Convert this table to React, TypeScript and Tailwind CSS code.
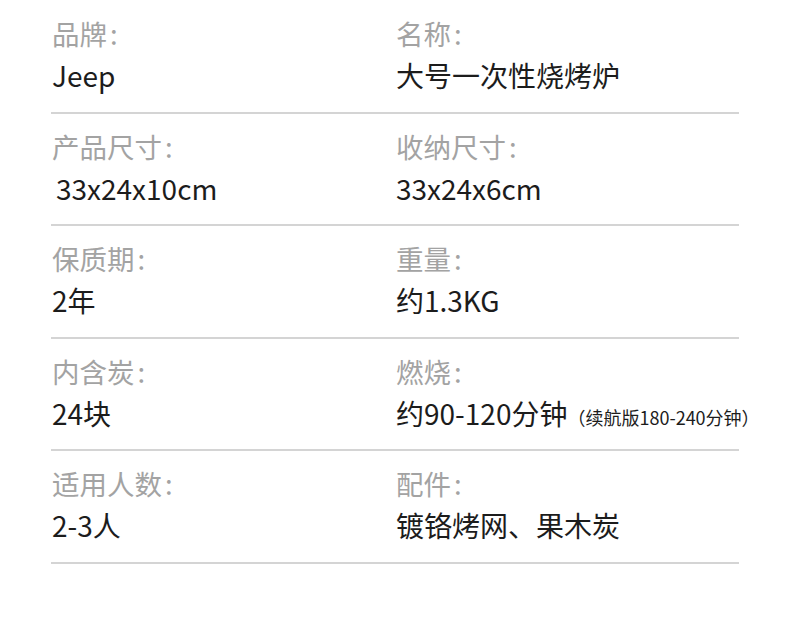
import * as React from 'react';

type Spec = {
    label: string;
    value: string;
    note?: string;
    indent?: boolean;
};

const rows: [Spec, Spec][] = [
    [
        { label: '品牌', value: 'Jeep' },
        { label: '名称', value: '大号一次性烧烤炉' },
    ],
    [
        { label: '产品尺寸', value: '33x24x10cm', indent: true },
        { label: '收纳尺寸', value: '33x24x6cm' },
    ],
    [
        { label: '保质期', value: '2年' },
        { label: '重量', value: '约1.3KG' },
    ],
    [
        { label: '内含炭', value: '24块' },
        { label: '燃烧', value: '约90-120分钟', note: '（续航版180-240分钟）' },
    ],
    [
        { label: '适用人数', value: '2-3人' },
        { label: '配件', value: '镀铬烤网、果木炭' },
    ],
];

function Cell({ spec }: { spec: Spec }) {
    return (
        <div className="flex flex-col pl-px">
            <span className="text-[27.5px] leading-[36px] text-[#a3a3a3]">
                {spec.label}
                <span className="ml-[3px]">:</span>
            </span>
            <span className={`mt-[4px] h-[40px] text-[28px] leading-[40px] text-[#1c1c1c] whitespace-nowrap ${spec.indent ? 'pl-[4px]' : ''}`}>
                {spec.value}
                {spec.note && <span className="text-[18px] leading-none">{spec.note}</span>}
            </span>
        </div>
    );
}

export default function App() {
    return (
        <div
            className="w-[790px] h-[641px] bg-white pt-[1px]"
            style={{ fontFamily: '"Noto Sans CJK SC", sans-serif' }}
        >
            <div className="ml-[51px] w-[688px] flex flex-col">
                {rows.map((row, i) => (
                    <div key={i} className="grid grid-cols-2 pt-[14px] pb-[16.5px] border-b-2 border-[#d4d4d4]">
                        <Cell spec={row[0]} />
                        <Cell spec={row[1]} />
                    </div>
                ))}
            </div>
        </div>
    );
}
